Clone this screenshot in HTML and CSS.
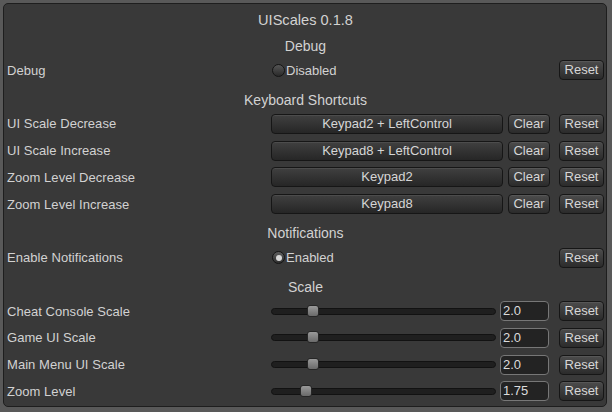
FILE: index.html
```html
<!DOCTYPE html>
<html>
<head>
<meta charset="utf-8">
<link rel="stylesheet" href="styles.css">
</head>
<body>
<div class="panel">
  <div class="row head title">UIScales 0.1.8</div>
  <div class="row head">Debug</div>
  <div class="row">
    <div class="label">Debug</div>
    <div class="ctl">
      <span class="radio"></span><span class="rtext">Disabled</span>
      <span class="spacer"></span>
      <button class="btn reset">Reset</button>
    </div>
  </div>
  <div class="row head">Keyboard Shortcuts</div>
  <div class="row">
    <div class="label">UI Scale Decrease</div>
    <div class="ctl">
      <button class="btn key">Keypad2 + LeftControl</button>
      <button class="btn clear">Clear</button>
      <button class="btn reset">Reset</button>
    </div>
  </div>
  <div class="row">
    <div class="label">UI Scale Increase</div>
    <div class="ctl">
      <button class="btn key">Keypad8 + LeftControl</button>
      <button class="btn clear">Clear</button>
      <button class="btn reset">Reset</button>
    </div>
  </div>
  <div class="row">
    <div class="label">Zoom Level Decrease</div>
    <div class="ctl">
      <button class="btn key">Keypad2</button>
      <button class="btn clear">Clear</button>
      <button class="btn reset">Reset</button>
    </div>
  </div>
  <div class="row">
    <div class="label">Zoom Level Increase</div>
    <div class="ctl">
      <button class="btn key">Keypad8</button>
      <button class="btn clear">Clear</button>
      <button class="btn reset">Reset</button>
    </div>
  </div>
  <div class="row head">Notifications</div>
  <div class="row">
    <div class="label">Enable Notifications</div>
    <div class="ctl">
      <span class="radio on"></span><span class="rtext">Enabled</span>
      <span class="spacer"></span>
      <button class="btn reset">Reset</button>
    </div>
  </div>
  <div class="row head">Scale</div>
  <div class="row">
    <div class="label">Cheat Console Scale</div>
    <div class="ctl">
      <div class="slider"><span class="thumb" style="left:35px"></span></div>
      <div class="field">2.0</div>
      <button class="btn reset">Reset</button>
    </div>
  </div>
  <div class="row">
    <div class="label">Game UI Scale</div>
    <div class="ctl">
      <div class="slider"><span class="thumb" style="left:35px"></span></div>
      <div class="field">2.0</div>
      <button class="btn reset">Reset</button>
    </div>
  </div>
  <div class="row">
    <div class="label">Main Menu UI Scale</div>
    <div class="ctl">
      <div class="slider"><span class="thumb" style="left:35px"></span></div>
      <div class="field">2.0</div>
      <button class="btn reset">Reset</button>
    </div>
  </div>
  <div class="row">
    <div class="label">Zoom Level</div>
    <div class="ctl">
      <div class="slider"><span class="thumb" style="left:28px"></span></div>
      <div class="field">1.75</div>
      <button class="btn reset">Reset</button>
    </div>
  </div>
</div>
</body>
</html>
```
FILE: styles.css
```css
* { box-sizing: border-box; }
html, body {
  margin: 0;
  padding: 0;
  background: #595959;
  width: 612px;
  height: 412px;
  overflow: hidden;
}
body {
  font-family: "Liberation Sans", Arial, sans-serif;
  font-size: 13px;
  color: #d2d2d2;
}
.panel {
  margin: 3px;
  width: 604px;
  height: 404px;
  padding-top: 1px;
  border: 1px solid #1e1e1e;
  border-radius: 5px;
  background: #393939;
  display: flex;
  flex-direction: column;
}
.row {
  display: flex;
  align-items: center;
  height: 26.75px;
  flex: none;
  padding: 0 2px 0 3px;
}
.head {
  justify-content: center;
  font-size: 14px;
  padding-top: 5px;
}
.title {
  height: 25.35px;
  font-size: 14.6px;
}
.label {
  width: 264px;
  flex: none;
  white-space: nowrap;
  letter-spacing: 0.05px;
}
.ctl {
  flex: 1;
  display: flex;
  align-items: center;
}
.spacer { flex: 1; }
.btn {
  font-family: "Liberation Sans", Arial, sans-serif;
  font-size: 13px;
  color: #d6d6d6;
  height: 20px;
  padding: 0;
  border: 1px solid #161616;
  border-radius: 4px;
  background: linear-gradient(#4c4c4c, #2b2b2b);
  box-shadow: inset 0 1px 0 rgba(255,255,255,0.07);
  line-height: 18px;
}
.key {
  width: 232px;
  margin-right: 5px;
  background: linear-gradient(#404040, #262626);
}
.clear {
  width: 42px;
  margin-right: 9px;
}
.reset {
  width: 45px;
}
.radio {
  width: 13px;
  height: 13px;
  margin-left: 1px;
  border-radius: 50%;
  border: 1px solid #141414;
  background: linear-gradient(#555, #2a2a2a);
  position: relative;
  flex: none;
}
.radio.on {
  background: linear-gradient(#5e5e5e, #2e2e2e);
}
.radio.on::after {
  content: "";
  position: absolute;
  left: 2.5px;
  top: 2.5px;
  width: 6px;
  height: 6px;
  border-radius: 50%;
  background: #d8d8d8;
}
.rtext { margin-left: 1px; }
.slider {
  width: 225px;
  height: 7px;
  margin-right: 4px;
  border-radius: 3.5px;
  background: #1f1f1f;
  border: 1px solid #121212;
  position: relative;
  flex: none;
}
.thumb {
  position: absolute;
  top: -4px;
  width: 12px;
  height: 12px;
  border-radius: 3px;
  border: 1px solid #262626;
  background: linear-gradient(#9a9a9a, #6a6a6a);
}
.field {
  width: 49px;
  height: 20px;
  margin-right: 10px;
  border: 1px solid #777;
  border-radius: 4px;
  background: #232323;
  color: #dcdcdc;
  padding-left: 2px;
  line-height: 18px;
}
```
